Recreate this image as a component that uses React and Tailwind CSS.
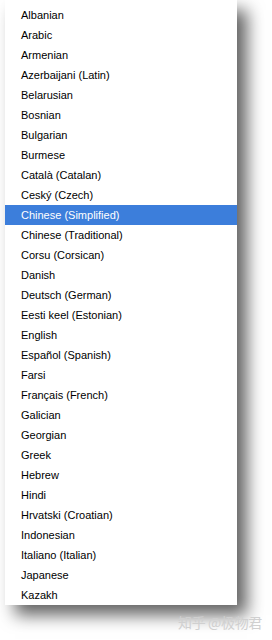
const LANGS = [
  'Albanian',
  'Arabic',
  'Armenian',
  'Azerbaijani (Latin)',
  'Belarusian',
  'Bosnian',
  'Bulgarian',
  'Burmese',
  'Català (Catalan)',
  'Ceský (Czech)',
  'Chinese (Simplified)',
  'Chinese (Traditional)',
  'Corsu (Corsican)',
  'Danish',
  'Deutsch (German)',
  'Eesti keel (Estonian)',
  'English',
  'Español (Spanish)',
  'Farsi',
  'Français (French)',
  'Galician',
  'Georgian',
  'Greek',
  'Hebrew',
  'Hindi',
  'Hrvatski (Croatian)',
  'Indonesian',
  'Italiano (Italian)',
  'Japanese',
  'Kazakh',
]

export default function App() {
  const selected = 'Chinese (Simplified)'

  return (
    <div className="relative w-[272px] h-[640px] bg-white overflow-hidden pl-[5px]">
      {/* List */}
      <div className="w-[232px] h-[605px] bg-white pt-[5px] shadow-[10px_10px_16px_rgba(0,0,0,0.62)]">
        {LANGS.map(l => (
          <div
            key={l}
            className={
              'h-[20px] flex items-center pl-4 text-[11px] leading-none ' +
              (l === selected ? 'bg-[#3c7edb] text-white' : 'text-black')
            }
            style={{ fontFamily: "'Liberation Sans', Arial, sans-serif" }}
          >
            {l}
          </div>
        ))}
      </div>

      {/* Watermark */}
      <div
        className="absolute left-[178px] top-[612px] text-[14px] text-[#d0d0d0] tracking-tight"
        style={{ fontFamily: "'Noto Sans CJK SC', sans-serif" }}
      >
        知乎 @极物君
      </div>
    </div>
  )
}
